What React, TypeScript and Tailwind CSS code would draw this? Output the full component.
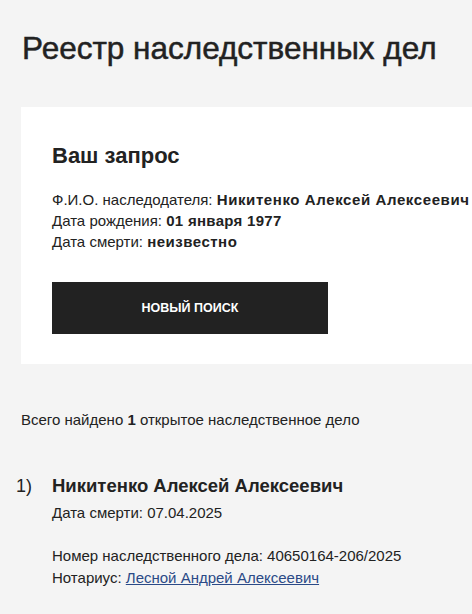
export default function App() {
  return (
    <div className="min-h-[614px] bg-[#f4f4f4] text-[#222] font-['Liberation_Sans',Arial,sans-serif] overflow-hidden">
      <h1 className="pl-[22px] pt-[28px] text-[31.5px] leading-[40px] font-normal [-webkit-text-stroke:0.5px_#222]">
        Реестр наследственных дел
      </h1>

      <div className="ml-[21px] mt-[39px] bg-white pl-[31px] pt-[34px] pb-[30px]">
        <h2 className="text-[22px] leading-[30px] font-bold">Ваш запрос</h2>
        <div className="mt-[18px] text-[15px] leading-[21px] whitespace-nowrap">
          <div>
            Ф.И.О. наследодателя: <b className="tracking-[0.6px]">Никитенко Алексей Алексеевич</b>
          </div>
          <div>
            Дата рождения: <b className="tracking-[0.3px]">01 января 1977</b>
          </div>
          <div>
            Дата смерти: <b className="tracking-[0.5px]">неизвестно</b>
          </div>
        </div>
        <button className="mt-[30px] flex h-[52px] w-[276px] items-center justify-center bg-[#222] text-[12.5px] font-bold uppercase text-white">
          Новый поиск
        </button>
      </div>

      <p className="pl-[21px] pt-[46px] text-[15px] leading-[20px]">
        Всего найдено <b>1</b> открытое наследственное дело
      </p>

      <div className="mt-[44px] flex">
        <div className="w-[52px] pl-[16px] text-[18px] leading-[24px]">1)</div>
        <div>
          <div className="text-[18.5px] leading-[24px] font-bold">Никитенко Алексей Алексеевич</div>
          <div className="mt-[5px] text-[15px] leading-[20px]">Дата смерти: 07.04.2025</div>
          <div className="mt-[22px] text-[15px] leading-[22px]">
            <div>Номер наследственного дела: 40650164-206/2025</div>
            <div>
              Нотариус:{" "}
              <a href="#" className="text-[#2b4a87] underline">
                Лесной Андрей Алексеевич
              </a>
            </div>
          </div>
        </div>
      </div>
    </div>
  );
}
